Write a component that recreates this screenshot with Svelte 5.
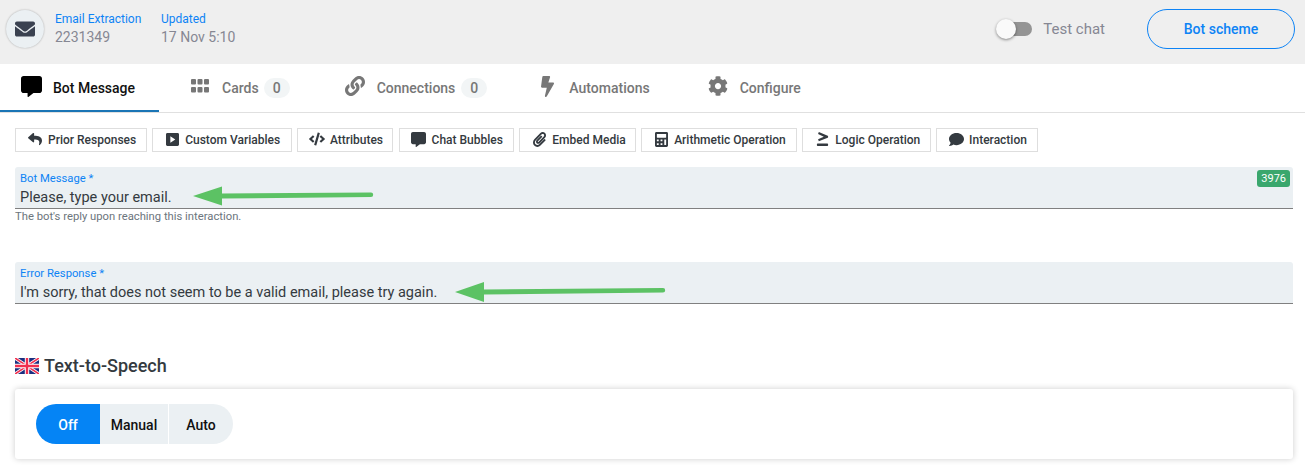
<script>
  const toolbar = [
    { label: 'Prior Responses', tw: 132, w: 16, h: 14, vb: '0 0 512 512', d: 'M8.309 189.836L184.313 37.851C199.719 24.546 224 35.347 224 56.015v80.053c160.629 1.839 288 34.032 288 186.258 0 61.441-39.581 122.309-83.333 154.132-13.653 9.931-33.111-2.533-28.077-18.631 45.344-145.012-21.507-183.51-176.59-185.742V360c0 20.7-24.3 31.453-39.687 18.164l-176.004-152c-11.071-9.562-11.086-26.753 0-36.328z' },
    { label: 'Custom Variables', tw: 139.5, w: 13, h: 15, vb: '0 0 448 512', d: 'M400 32H48C21.5 32 0 53.5 0 80v352c0 26.5 21.5 48 48 48h352c26.5 0 48-21.5 48-48V80c0-26.5-21.5-48-48-48zM150 144l170 112-170 112z' },
    { label: 'Attributes', tw: 96.5, w: 17, h: 14, vb: '0 0 640 512', d: 'M278.9 511.5l-61-17.7c-6.4-1.8-10-8.5-8.2-14.9L346.2 8.7c1.8-6.4 8.5-10 14.9-8.2l61 17.7c6.4 1.8 10 8.5 8.2 14.9L293.8 503.3c-1.9 6.4-8.5 10.1-14.9 8.2zm-114-112.2l43.5-46.4c4.6-4.9 4.3-12.7-.8-17.2L117 256l90.6-79.7c5.1-4.5 5.5-12.3.8-17.2l-43.5-46.4c-4.5-4.8-12.1-5.1-17-.5L3.8 247.2c-5.1 4.7-5.1 12.8 0 17.5l144.1 135.1c4.9 4.6 12.5 4.4 17-.5zm327.2.6l144.1-135.1c5.1-4.7 5.1-12.8 0-17.5L492.1 112.1c-4.8-4.5-12.4-4.3-17 .5L431.6 159c-4.6 4.9-4.3 12.7.8 17.2L523 256l-90.6 79.7c-5.1 4.5-5.5 12.3-.8 17.2l43.5 46.4c4.5 4.9 12.1 5.1 17 .6z' },
    { label: 'Chat Bubbles', tw: 115.6, w: 15, h: 15, vb: '0 0 512 512', d: 'M448 0H64C28.7 0 0 28.7 0 64v288c0 35.3 28.7 64 64 64h96v84c0 9.8 11.2 15.5 19.1 9.7L304 416h144c35.3 0 64-28.7 64-64V64c0-35.3-28.7-64-64-64z' },
    { label: 'Embed Media', tw: 116.6, w: 13, h: 15, vb: '0 0 448 512', d: 'M43.246 466.142c-58.43-60.289-57.341-157.511 1.386-217.581L254.392 34c44.316-45.332 116.351-45.336 160.671 0 43.89 44.894 43.943 117.329 0 162.276L232.214 383.128c-29.855 30.537-78.633 30.111-107.982-.998-28.275-29.97-27.368-77.473 1.452-106.953l143.743-146.835c6.182-6.314 16.312-6.422 22.626-.241l22.861 22.379c6.315 6.182 6.422 16.312.241 22.626L171.427 319.927c-4.932 5.045-5.236 13.428-.648 18.292 4.372 4.634 11.245 4.711 15.688.165l182.849-186.851c19.613-20.062 19.613-52.725-.011-72.798-19.189-19.627-49.957-19.637-69.154 0L90.39 293.295c-34.763 35.56-35.299 93.12-1.191 128.313 34.01 35.093 88.985 35.137 123.058.286l172.06-175.999c6.177-6.319 16.307-6.433 22.626-.256l22.877 22.364c6.319 6.177 6.434 16.307.256 22.626l-172.06 175.998c-59.576 60.938-155.943 60.216-214.77-.485z' },
    { label: 'Arithmetic Operation', tw: 156, w: 13, h: 15, vb: '0 0 448 512', d: 'M400 0H48C22.4 0 0 22.4 0 48v416c0 25.6 22.4 48 48 48h352c25.6 0 48-22.4 48-48V48c0-25.6-22.4-48-48-48zM128 435.2c0 6.4-6.4 12.8-12.8 12.8H76.8c-6.4 0-12.8-6.4-12.8-12.8v-38.4c0-6.4 6.4-12.8 12.8-12.8h38.4c6.4 0 12.8 6.4 12.8 12.8v38.4zm0-128c0 6.4-6.4 12.8-12.8 12.8H76.8c-6.4 0-12.8-6.4-12.8-12.8v-38.4c0-6.4 6.4-12.8 12.8-12.8h38.4c6.4 0 12.8 6.4 12.8 12.8v38.4zm128 128c0 6.4-6.4 12.8-12.8 12.8h-38.4c-6.4 0-12.8-6.4-12.8-12.8v-38.4c0-6.4 6.4-12.8 12.8-12.8h38.4c6.4 0 12.8 6.4 12.8 12.8v38.4zm0-128c0 6.4-6.4 12.8-12.8 12.8h-38.4c-6.4 0-12.8-6.4-12.8-12.8v-38.4c0-6.4 6.4-12.8 12.8-12.8h38.4c6.4 0 12.8 6.4 12.8 12.8v38.4zm128 128c0 6.4-6.4 12.8-12.8 12.8h-38.4c-6.4 0-12.8-6.4-12.8-12.8V268.8c0-6.4 6.4-12.8 12.8-12.8h38.4c6.4 0 12.8 6.4 12.8 12.8v166.4zm0-256c0 6.4-6.4 12.8-12.8 12.8H76.8c-6.4 0-12.8-6.4-12.8-12.8V76.8C64 70.4 70.4 64 76.8 64h294.4c6.4 0 12.8 6.4 12.8 12.8v102.4z' },
    { label: 'Logic Operation', tw: 128.6, w: 13, h: 14, vb: '0 0 384 480', d: 'M40 70L66 0 370 125c12 5 14 15 14 25v18c0 10-2 20-14 25L66 318 40 248 236 159zM24 392h336c13 0 24 11 24 24v40c0 13-11 24-24 24H24c-13 0-24-11-24-24v-40c0-13 11-24 24-24z' },
    { label: 'Interaction', tw: 102, w: 15, h: 15, vb: '0 0 512 512', d: 'M256 32C114.6 32 0 125.1 0 240c0 49.6 21.4 95 57 130.7C44.5 421.1 2.7 466 2.2 466.5c-2.2 2.3-2.8 5.7-1.5 8.7S4.8 480 8 480c66.3 0 116-31.8 140.6-51.4 32.7 12.3 69 19.4 107.4 19.4 141.4 0 256-93.1 256-208S397.4 32 256 32z' }
  ];
</script>

<div class="page">
  <header class="top">
    <div class="avatar">
      <svg width="20" height="20" viewBox="0 0 512 512"><path fill="#3a4150" d="M502.3 190.8c3.9-3.1 9.7-.2 9.7 4.7V400c0 26.5-21.5 48-48 48H48c-26.5 0-48-21.5-48-48V195.6c0-5 5.7-7.8 9.7-4.7 22.4 17.4 52.1 39.5 154.1 113.6 21.1 15.4 56.7 47.8 92.2 47.6 35.7.3 72-32.8 92.3-47.6 102-74.1 131.6-96.3 154-113.7zM256 320c23.2.4 56.6-29.2 73.4-41.4 132.7-96.3 142.8-104.7 173.4-128.7 5.8-4.5 9.2-11.5 9.2-18.9v-19c0-26.5-21.5-48-48-48H48C21.5 64 0 85.5 0 112v19c0 7.4 3.4 14.3 9.2 18.9 30.6 23.9 40.7 32.4 173.4 128.7 16.8 12.2 50.2 41.8 73.4 41.4z"/></svg>
    </div>
    <div class="meta meta-id"><span class="meta-label">Email Extraction</span><span class="meta-value">2231349</span></div>
    <div class="meta"><span class="meta-label">Updated</span><span class="meta-value">17 Nov 5:10</span></div>
    <div class="top-right">
      <div class="switch"><span class="knob"></span></div>
      <span class="test">Test chat</span>
      <button class="scheme">Bot scheme</button>
    </div>
  </header>

  <nav class="tabs">
    <div class="tab active t-bot">
      <span class="ti"><svg width="21" height="21" viewBox="0 0 512 512"><path fill="#000" d="M448 0H64C28.7 0 0 28.7 0 64v288c0 35.3 28.7 64 64 64h96v84c0 9.8 11.2 15.5 19.1 9.7L304 416h144c35.3 0 64-28.7 64-64V64c0-35.3-28.7-64-64-64z"/></svg></span>
      <span>Bot Message</span>
    </div>
    <div class="tab t-cards">
      <span class="ti"><svg width="18" height="14" viewBox="0 0 18 14" fill="#777"><rect x="0" y="0" width="5" height="5.5" rx="1"/><rect x="6.5" y="0" width="5" height="5.5" rx="1"/><rect x="13" y="0" width="5" height="5.5" rx="1"/><rect x="0" y="8" width="5" height="5.5" rx="1"/><rect x="6.5" y="8" width="5" height="5.5" rx="1"/><rect x="13" y="8" width="5" height="5.5" rx="1"/></svg></span>
      <span>Cards</span><span class="pill">0</span>
    </div>
    <div class="tab t-conn">
      <span class="ti"><svg width="20" height="20" viewBox="0 0 512 512"><path fill="#777" d="M326.612 185.391c59.747 59.809 58.927 155.698.36 214.59-.11.12-.24.25-.36.37l-67.2 67.2c-59.27 59.27-155.699 59.262-214.96 0-59.27-59.26-59.27-155.7 0-214.96l37.106-37.106c9.84-9.84 26.786-3.3 27.294 10.606.648 17.722 3.826 35.527 9.69 52.721 1.986 5.822.567 12.262-3.783 16.612l-13.087 13.087c-28.026 28.026-28.905 73.66-1.155 101.96 28.024 28.579 74.086 28.749 102.325.51l67.2-67.19c28.191-28.191 28.073-73.757 0-101.83-3.701-3.694-7.429-6.564-10.341-8.569a16.037 16.037 0 0 1-6.947-12.606c-.396-10.567 3.348-21.456 11.698-29.806l21.054-21.055c5.521-5.521 14.182-6.199 20.584-1.731a152.482 152.482 0 0 1 20.522 17.197zM467.547 44.449c-59.261-59.262-155.69-59.27-214.96 0l-67.2 67.2c-.12.12-.25.25-.36.37-58.566 58.892-59.387 154.781.36 214.59a152.454 152.454 0 0 0 20.521 17.196c6.402 4.468 15.064 3.789 20.584-1.731l21.054-21.055c8.35-8.35 12.094-19.239 11.698-29.806a16.037 16.037 0 0 0-6.947-12.606c-2.912-2.005-6.64-4.875-10.341-8.569-28.073-28.073-28.191-73.639 0-101.83l67.2-67.19c28.239-28.239 74.3-28.069 102.325.51 27.75 28.3 26.872 73.934-1.155 101.96l-13.087 13.087c-4.35 4.35-5.769 10.79-3.783 16.612 5.864 17.194 9.042 34.999 9.69 52.721.509 13.906 17.454 20.446 27.294 10.606l37.106-37.106c59.271-59.259 59.271-155.699.001-214.959z"/></svg></span>
      <span>Connections</span><span class="pill">0</span>
    </div>
    <div class="tab t-auto">
      <span class="ti"><svg width="13" height="21" viewBox="0 0 320 512"><path fill="#777" d="M296 160H180.6l42.6-129.8C227.2 15 215.7 0 200 0H56C44 0 33.8 8.9 32.2 20.8l-32 240C-1.7 275.2 9.5 288 24 288h118.7L96.6 482.5c-3.6 15.2 8 29.5 23.3 29.5 8.4 0 16.4-4.4 20.8-12l176-304c9.3-15.9-2.2-36-20.7-36z"/></svg></span>
      <span>Automations</span>
    </div>
    <div class="tab t-conf">
      <span class="ti"><svg width="20" height="20" viewBox="0 0 512 512"><path fill="#777" d="M487.4 315.7l-42.6-24.6c4.3-23.2 4.3-47 0-70.2l42.6-24.6c4.9-2.8 7.1-8.6 5.5-14-11.1-35.6-30-67.8-54.7-94.6-3.8-4.1-10-5.1-14.8-2.3L380.8 110c-17.9-15.4-38.5-27.3-60.8-35.1V25.8c0-5.6-3.9-10.5-9.4-11.7-36.7-8.2-74.3-7.8-109.2 0-5.5 1.2-9.4 6.1-9.4 11.7V75c-22.2 7.9-42.8 19.8-60.8 35.1L88.7 85.5c-4.9-2.8-11-1.9-14.8 2.3-24.7 26.7-43.6 58.9-54.7 94.6-1.7 5.4.6 11.2 5.5 14L67.3 221c-4.3 23.2-4.3 47 0 70.2l-42.6 24.6c-4.9 2.8-7.1 8.6-5.5 14 11.1 35.6 30 67.8 54.7 94.6 3.8 4.1 10 5.1 14.8 2.3l42.6-24.6c17.9 15.4 38.5 27.3 60.8 35.1v49.2c0 5.6 3.9 10.5 9.4 11.7 36.7 8.2 74.3 7.8 109.2 0 5.5-1.2 9.4-6.1 9.4-11.7v-49.2c22.2-7.9 42.8-19.8 60.8-35.1l42.6 24.6c4.9 2.8 11 1.9 14.8-2.3 24.7-26.7 43.6-58.9 54.7-94.6 1.5-5.5-.7-11.3-5.6-14.1zM256 336c-44.1 0-80-35.9-80-80s35.9-80 80-80 80 35.9 80 80-35.9 80-80 80z"/></svg></span>
      <span>Configure</span>
    </div>
  </nav>

  <main class="content">
    <div class="toolbar">
      {#each toolbar as b}
        <button class="tool" style:width="{b.tw}px">
          <span class="tool-icon"><svg width={b.w} height={b.h} viewBox={b.vb}><path fill="#343a40" fill-rule="evenodd" d={b.d}/></svg></span>
          <span>{b.label}</span>
        </button>
      {/each}
    </div>

    <div class="field first">
      <div class="f-label">Bot Message *</div>
      <div class="f-value">Please, type your email.</div>
      <span class="count">3976</span>
      <svg class="arrow a1" width="183" height="20" viewBox="0 0 183 20"><path fill="#5cc264" d="M0 10 29 0.5V7.5L178 6.5a2.2 2.2 0 0 1 0 4.4L29 12.5 V19.5Z"/></svg>
    </div>
    <div class="help">The bot's reply upon reaching this interaction.</div>

    <div class="field second">
      <div class="f-label">Error Response *</div>
      <div class="f-value">I'm sorry, that does not seem to be a valid email, please try again.</div>
      <svg class="arrow a2" width="213" height="22" viewBox="0 0 213 22"><path fill="#5cc264" d="M0 11 29 1V8.5L208 7a2.2 2.2 0 0 1 0 4.4L29 13.5V21Z"/></svg>
    </div>

    <h2 class="tts">
      <svg width="24" height="16" viewBox="0 0 60 40" preserveAspectRatio="none">
        <rect width="60" height="40" fill="#1b2f80"/>
        <path d="M0 0 60 40M60 0 0 40" stroke="#fff" stroke-width="8"/>
        <path d="M0 0 60 40M60 0 0 40" stroke="#f0304f" stroke-width="4"/>
        <path d="M30 0V40M0 20H60" stroke="#fff" stroke-width="11"/>
        <path d="M30 0V40M0 20H60" stroke="#f0304f" stroke-width="6"/>
      </svg>
      <span>Text-to-Speech</span>
    </h2>

    <div class="card">
      <div class="seg">
        <span class="s s-off">Off</span>
        <span class="s s-man">Manual</span>
        <span class="s s-auto">Auto</span>
      </div>
    </div>
  </main>
</div>

<style>
  :global(body) { margin: 0; background: #fff; }
  .page { width: 1305px; height: 472px; overflow: hidden; font-family: Roboto, "Liberation Sans", sans-serif; }
  .top { height: 64px; background: #efefef; display: flex; align-items: center; padding: 0 10px 6px 6px; box-sizing: border-box; }
  .avatar { width: 38px; height: 38px; border-radius: 50%; background: #ebf0f3; box-shadow: 0 0 2px rgba(0,0,0,.3); display: flex; align-items: center; justify-content: center; margin: 0 11px 0 0; }
  .meta { display: flex; flex-direction: column; margin-top: -2px; }
  .meta-id { width: 106px; }
  .meta-label { font-size: 12px; line-height: 18px; color: #0d83f5; }
  .meta-value { font-size: 14px; line-height: 18px; color: #868793; }
  .top-right { margin-left: auto; display: flex; align-items: center; }
  .switch { position: relative; width: 32px; height: 14px; border-radius: 7px; background: #949494; margin-right: 11px; }
  .knob { position: absolute; left: -4px; top: -3px; width: 20px; height: 20px; border-radius: 50%; background: #fafafa; box-shadow: 0 1px 3px rgba(0,0,0,.45); }
  .test { font-size: 15px; color: #868793; margin-right: 42px; }
  .scheme { width: 148px; height: 40px; border: 1px solid #0d83f5; border-radius: 20px; background: transparent; color: #0d83f5; font: 500 14px Roboto, sans-serif; padding: 0; }

  .tabs { height: 48px; display: flex; border-bottom: 1px solid #e0e0e0; box-sizing: content-box; position: relative; }
  .tab { display: flex; align-items: center; font-size: 14px; font-weight: 500; color: #777; height: 48px; box-sizing: border-box; }
  .ti { width: 24px; margin-right: 10px; display: flex; justify-content: center; align-items: center; margin-top: -4px; }
  .tab.active { color: #111; border-bottom: 2px solid #1a75b5; padding: 2px 24px 0 19px; }
  .t-cards { padding-left: 29px; }
  .t-conn { padding-left: 53px; }
  .t-conn .pill { margin-left: 6px; }
  .t-auto { padding-left: 48px; }
  .t-conf { padding-left: 56px; }
  .pill { margin-left: 5px; min-width: 26px; height: 20px; border-radius: 10px; background: #f2f5f6; color: #777; text-align: center; line-height: 20px; }

  .content { padding: 15px 12px 0 15px; }
  .toolbar { display: flex; gap: 5.2px; }
  .tool { height: 24px; padding: 0 0 0 11px; display: flex; align-items: center; justify-content: flex-start; gap: 5px; background: #fff; border: 1px solid #dedede; font: 500 12px Roboto, sans-serif; color: #343a40; box-sizing: border-box; white-space: nowrap; flex: none; }
  .tool-icon { width: 16px; display: flex; justify-content: center; margin-top: -2px; }

  .field { position: relative; height: 42px; background: #ebf0f3; border-bottom: 1px solid #808080; box-sizing: border-box; padding: 4px 5px 0; border-radius: 3px 3px 0 0; }
  .first { margin-top: 15px; }
  .second { margin-top: 38px; }
  .f-label { font-size: 11.25px; line-height: 15px; color: #0d83f5; }
  .f-value { font-size: 14.5px; line-height: 20px; margin-top: 2px; color: #343a40; }
  .count { position: absolute; right: 3px; top: 3px; height: 17px; padding: 0 4px; border-radius: 3px; background: #3aa76d; color: #fff; font-size: 11px; line-height: 17px; }
  .help { font-size: 11.25px; line-height: 15px; color: #6c757d; }
  .arrow { position: absolute; }
  .a1 { left: 178px; top: 19px; }
  .a2 { left: 440px; top: 19px; }

  .tts { margin: 50px 0 0; display: flex; align-items: center; gap: 5px; font-size: 18px; font-weight: 500; line-height: 24px; color: #343a40; }
  .card { margin-top: 11px; height: 70px; background: #fff; border-radius: 3px; box-shadow: 0 0 6px rgba(0,0,0,.2); padding: 15px 21px; box-sizing: border-box; }
  .seg { display: flex; height: 40px; }
  .s { display: flex; align-items: center; justify-content: center; font-size: 14px; font-weight: 500; background: #ebf0f3; color: #111; padding-top: 1px; box-sizing: border-box; }
  .s-off { width: 64px; background: #0584f5; color: #fff; border-radius: 20px 0 0 20px; }
  .s-man { width: 68px; }
  .s-auto { width: 64px; margin-left: 1px; border-radius: 0 20px 20px 0; }
</style>
